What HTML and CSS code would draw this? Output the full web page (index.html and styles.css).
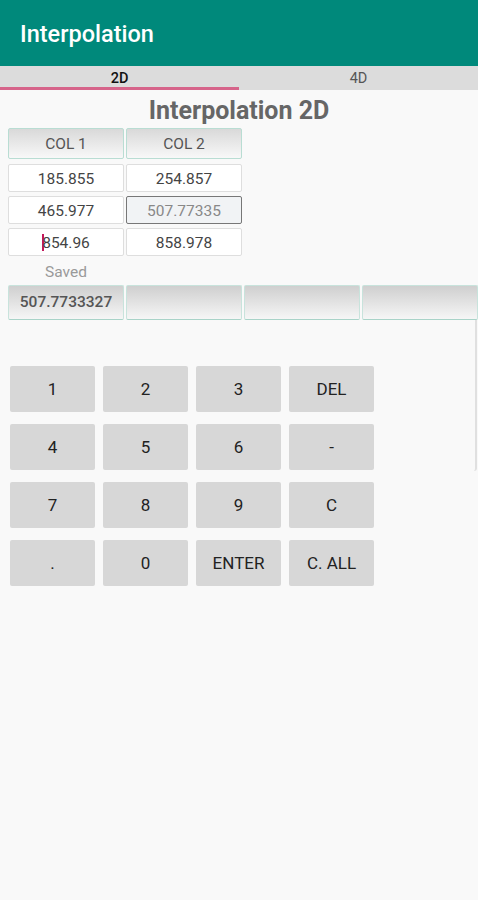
FILE: index.html
```html
<!DOCTYPE html>
<html>
    <head>
        <meta charset="utf-8">
        <title>Interpolation</title>
        <link rel="stylesheet" href="styles.css">
    </head>
    <body>
        <div id="appbar">Interpolation</div>
        <div id="tabs">
            <div class="tab active">2D</div>
            <div class="tab">4D</div>
        </div>
        <h1 id="heading">Interpolation 2D</h1>
        <div id="table">
            <div class="head">COL 1</div>
            <div class="head">COL 2</div>
            <div class="cell">185.855</div>
            <div class="cell">254.857</div>
            <div class="cell">465.977</div>
            <div class="cell focused">507.77335</div>
            <div class="cell"><span class="caret"></span>854.96</div>
            <div class="cell">858.978</div>
        </div>
        <p id="savedLbl">Saved</p>
        <div id="saved">
            <div class="slot">507.7733327</div>
            <div class="slot"></div>
            <div class="slot"></div>
            <div class="slot"></div>
        </div>
        <div id="area">
            <div id="keypad">
                <button class="key">1</button>
                <button class="key">2</button>
                <button class="key">3</button>
                <button class="key">DEL</button>
                <button class="key">4</button>
                <button class="key">5</button>
                <button class="key">6</button>
                <button class="key">-</button>
                <button class="key">7</button>
                <button class="key">8</button>
                <button class="key">9</button>
                <button class="key">C</button>
                <button class="key">.</button>
                <button class="key">0</button>
                <button class="key">ENTER</button>
                <button class="key">C. ALL</button>
            </div>
        </div>
    </body>
</html>
```

FILE: styles.css
```css
* {
    padding: 0;
    margin: 0;
    box-sizing: border-box;
}

body {
    background-color: #f9f9f9;
    font-family: Roboto, "Liberation Sans", sans-serif;
    width: 478px;
    height: 900px;
    overflow: hidden;
}

#appbar {
    height: 66px;
    background-color: #00897b;
    color: #fff;
    font-size: 23.5px;
    font-weight: 500;
    line-height: 68px;
    padding-left: 20px;
}

#tabs {
    display: flex;
    height: 24px;
    background-color: #dcdcdc;
}

.tab {
    flex: 1;
    text-align: center;
    font-size: 14.5px;
    line-height: 25px;
    color: #555;
}

.tab.active {
    color: #111;
    font-weight: 500;
    border-bottom: 3px solid #d6648a;
}

#heading {
    text-align: center;
    font-size: 25px;
    font-weight: 700;
    color: #666;
    height: 38px;
    line-height: 42px;
}

#table {
    display: grid;
    grid-template-columns: 116px 116px;
    grid-template-rows: 32px 28px 28px 28px;
    column-gap: 2px;
    row-gap: 4px;
    margin-left: 8px;
}

.head {
    background: linear-gradient(#d9d9d9, #f8f8f8);
    border: 1px solid #b9ddd3;
    border-radius: 2px;
    font-size: 15.5px;
    color: #555;
    text-align: center;
    line-height: 31px;
    margin-bottom: 1px;
}

.cell {
    background-color: #fff;
    border: 1px solid #dedede;
    border-radius: 2px;
    font-size: 15.5px;
    color: #444;
    text-align: center;
    line-height: 28px;
}

.cell.focused {
    background-color: #f1f3f5;
    border: 1.5px solid #777;
    color: #888;
}

.caret {
    display: inline-block;
    width: 2px;
    height: 17px;
    margin-right: -2px;
    vertical-align: -3px;
    background-color: #c2185b;
}

#savedLbl {
    width: 116px;
    margin-left: 8px;
    text-align: center;
    font-size: 15.5px;
    color: #9a9a9a;
    height: 29px;
    line-height: 32px;
}

#saved {
    display: flex;
    gap: 2px;
    margin-left: 8px;
    height: 35px;
}

.slot {
    flex: 0 0 116px;
    background: linear-gradient(#cfcfcf, #f6f6f6);
    border: 1px solid #c8e3dc;
    border-bottom-color: #a9d3c8;
    border-radius: 2px;
    font-size: 15.5px;
    font-weight: 500;
    color: #555;
    text-align: center;
    line-height: 33px;
}

#area {
    height: 151px;
    width: 477px;
    border-right: 2px solid #e0e0e0;
    border-bottom-right-radius: 3px;
    padding: 46px 0 0 10px;
}

#keypad {
    display: grid;
    grid-template-columns: repeat(4, 85px);
    grid-auto-rows: 46px;
    column-gap: 8px;
    row-gap: 12px;
}

.key {
    background-color: #d7d7d7;
    border: none;
    border-radius: 2px;
    font-family: Roboto, "Liberation Sans", sans-serif;
    font-size: 17px;
    color: #222;
}
```
